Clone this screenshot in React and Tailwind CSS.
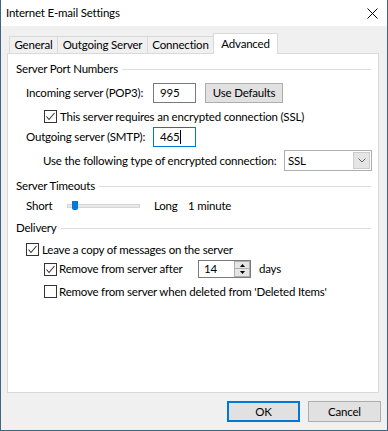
import React from 'react';

const font = "font-['Lato',sans-serif]";

// Win10 style checkbox
const Check = ({ checked }) => (
  <span className="w-[13px] h-[13px] border border-[#333333] bg-white flex items-center justify-center shrink-0">
    {checked && (
      <svg width="11" height="11" viewBox="0 0 11 11">
        <path d="M1.5 5.5 L4 8.5 L9.5 2" fill="none" stroke="#333333" strokeWidth="1.1" />
      </svg>
    )}
  </span>
);

const GroupHeader = ({ title, className }) => (
  <div className={`flex items-center h-[16px] pl-[8px] pr-[7px] ${className}`}>
    <span className="leading-none">{title}</span>
    <div className="flex-1 h-px bg-[#dcdcdc] ml-[4px]" />
  </div>
);

const Tab = ({ label, width, active, first }) => (
  <div
    className={`${width} flex items-center justify-center border border-[#d9d9d9] ${first ? '' : '-ml-px'} ${
      active ? 'h-[21px] bg-white border-b-0 relative z-10 -mb-px' : 'h-[17px] bg-[#f0f0f0] border-b-0'
    }`}
  >
    <span className="leading-none">{label}</span>
  </div>
);

const App = () => {
  return (
    <div className={`w-[388px] h-[431px] bg-[#f0f0f0] border-x border-b border-[#3c6680] flex flex-col text-[11.5px] tracking-[-0.2px] text-black whitespace-nowrap ${font}`}>
      {/* title bar */}
      <div className="h-[26px] bg-white flex items-center justify-between pl-[5px] pr-[9px]">
        <span className="leading-none">Internet E-mail Settings</span>
        <svg width="11" height="11" viewBox="0 0 11 11">
          <path d="M0.5 0.5 L10.5 10.5 M10.5 0.5 L0.5 10.5" stroke="#000" strokeWidth="1" />
        </svg>
      </div>

      {/* tabs */}
      <div className="mt-[7px] h-[20px] flex items-end pl-[8px]">
        <Tab label="General" width="w-[49px]" first />
        <Tab label="Outgoing Server" width="w-[91px]" />
        <Tab label="Connection" width="w-[67px]" />
        <Tab label="Advanced" width="w-[65px]" active />
      </div>

      {/* panel */}
      <div className="ml-[6px] w-[372px] h-[340px] bg-white border border-[#d9d9d9] flex flex-col">
        <GroupHeader title="Server Port Numbers" className="mt-[7px]" />

        <div className="mt-[6px] h-[20px] flex items-center pl-[18px]">
          <span className="w-[127px] leading-none">Incoming server (POP3):</span>
          <div className="w-[43px] h-[20px] border border-[#7a7a7a] flex items-center pl-[6px]">995</div>
          <div className="ml-[9px] w-[78px] h-[20px] bg-[#e1e1e1] border border-[#adadad] flex items-center justify-center">
            Use Defaults
          </div>
        </div>

        <div className="mt-[7px] h-[13px] flex items-center pl-[36px] gap-[3px]">
          <Check checked />
          <span className="leading-none">This server requires an encrypted connection (SSL)</span>
        </div>

        <div className="mt-[4px] h-[20px] flex items-center pl-[18px]">
          <span className="w-[127px] leading-none">Outgoing server (SMTP):</span>
          <div className="w-[43px] h-[20px] border border-[#0078d7] flex items-center pl-[6px]">
            465<span className="w-px h-[14px] bg-black ml-px" />
          </div>
        </div>

        <div className="mt-[3px] h-[21px] flex items-center pl-[35px]">
          <span className="w-[241px] leading-none">Use the following type of encrypted connection:</span>
          <div className="w-[88px] h-[21px] border border-[#adadad] bg-white flex items-center justify-between pl-[3px] pr-[1px]">
            <span>SSL</span>
            <div className="w-[17px] h-[17px] bg-[#e5e5e5] border border-[#cccccc] flex items-center justify-center">
              <svg width="8" height="5" viewBox="0 0 8 5">
                <path d="M0.5 0.5 L4 4 L7.5 0.5" fill="none" stroke="#606060" strokeWidth="1" />
              </svg>
            </div>
          </div>
        </div>

        <GroupHeader title="Server Timeouts" className="mt-[7px]" />

        <div className="mt-[4px] h-[16px] flex items-center pl-[18px]">
          <span className="w-[41px] leading-none">Short</span>
          <div className="relative w-[73px] h-[4px] bg-[#e7eaea] border border-[#d6d6d6]">
            <div className="absolute left-[4px] top-[-4px] w-[6px] h-[9px] bg-[#0078d7] rounded-b-[2px]" />
          </div>
          <span className="ml-[14px] w-[34px] leading-none">Long</span>
          <span className="leading-none">1 minute</span>
        </div>

        <GroupHeader title="Delivery" className="mt-[6px]" />

        <div className="mt-[7px] h-[13px] flex items-center pl-[18px] gap-[3px]">
          <Check checked />
          <span className="leading-none">Leave a copy of messages on the server</span>
        </div>

        <div className="mt-[4px] h-[18px] flex items-center pl-[36px]">
          <Check checked />
          <span className="ml-[2px] w-[139px] leading-none">Remove from server after</span>
          <div className="w-[53px] h-[18px] border border-[#7a7a7a] flex items-center justify-between pl-[5px]">
            <span>14</span>
            <div className="w-[16px] h-[16px] flex flex-col">
              <div className="h-[8px] bg-[#e5e5e5] border border-[#b0b0b0] flex items-center justify-center">
                <svg width="5" height="3" viewBox="0 0 5 3"><path d="M0 3 L2.5 0 L5 3 Z" fill="#000" /></svg>
              </div>
              <div className="h-[8px] bg-[#e5e5e5] border border-[#b0b0b0] border-t-0 flex items-center justify-center">
                <svg width="5" height="3" viewBox="0 0 5 3"><path d="M0 0 L2.5 3 L5 0 Z" fill="#000" /></svg>
              </div>
            </div>
          </div>
          <span className="ml-[8px] leading-none">days</span>
        </div>

        <div className="mt-[7px] h-[13px] flex items-center pl-[36px] gap-[2px]">
          <Check />
          <span className="leading-none">Remove from server when deleted from 'Deleted Items'</span>
        </div>
      </div>

      {/* buttons */}
      <div className="mt-[8px] flex justify-end gap-[8px] pr-[6px]">
        <div className="w-[73px] h-[21px] bg-[#e1e1e1] border-2 border-[#0078d7] flex items-center justify-center">OK</div>
        <div className="w-[73px] h-[21px] bg-[#e1e1e1] border border-[#adadad] flex items-center justify-center">Cancel</div>
      </div>
    </div>
  );
};

export default App;
